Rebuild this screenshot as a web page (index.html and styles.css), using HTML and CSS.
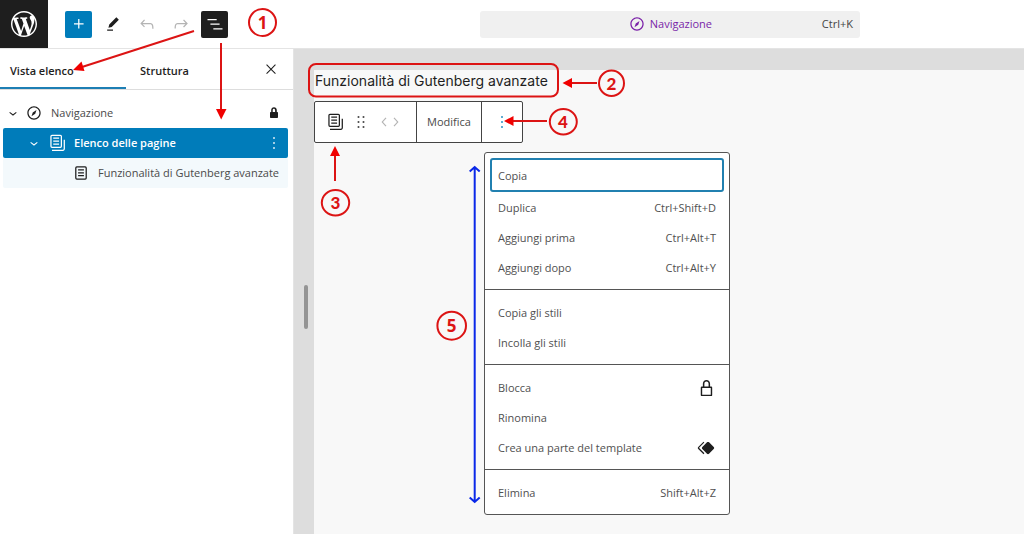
FILE: index.html
```html
<!DOCTYPE html>
<html lang="it">
<head>
<meta charset="utf-8">
<title>Navigazione</title>
<link rel="stylesheet" href="styles.css">
</head>
<body>
<svg class="sprite" aria-hidden="true">
  <symbol id="navigation" viewBox="0 0 24 24"><path d="M12 4c-4.400 0-8 3.600-8 8s3.600 8 8 8 8-3.600 8-8-3.600-8-8-8zm0 14.500c-3.600 0-6.500-2.900-6.500-6.500S8.400 5.500 12 5.500s6.500 2.900 6.500 6.500-2.900 6.500-6.500 6.500zM9 16l4.500-3L15 8.400l-4.500 3L9 16z"/></symbol>
  <symbol id="chevron" viewBox="0 0 24 24"><path d="M17.500 11.600L12 16l-5.500-4.400.9-1.200L12 14l4.500-3.600 1 1.200z"/></symbol>
  <symbol id="pages" viewBox="0 0 24 24"><path d="M14.500 5.500h-7V7h7V5.500ZM7.500 9h7v1.500h-7V9Zm7 3.500h-7V14h7v-1.500Z"/><path fill-rule="evenodd" d="M16 2H6a2 2 0 0 0-2 2v12a2 2 0 0 0 2 2h10a2 2 0 0 0 2-2V4a2 2 0 0 0-2-2ZM6 3.500h10a.5.5 0 0 1 .5.5v12a.5.5 0 0 1-.5.5H6a.5.5 0 0 1-.5-.5V4a.5.5 0 0 1 .5-.5Z"/><path d="M20 8v11c0 .69-.31 1-.999 1H6v1.500h13.001c1.520 0 2.499-.982 2.499-2.500V8H20Z"/></symbol>
  <symbol id="more" viewBox="0 0 24 24"><path d="M13 19h-2v-2h2v2zm0-6h-2v-2h2v2zm0-6h-2V5h2v2z"/></symbol>
</svg>

<div class="editor">
  <header class="header">
    <a class="logo" href="#" aria-label="WordPress">
      <svg viewBox="0 0 20 20"><path d="M20 10c0-5.510-4.490-10-10-10C4.480 0 0 4.490 0 10c0 5.520 4.480 10 10 10 5.510 0 10-4.480 10-10zM7.780 15.370L4.370 6.220c.55-.02 1.170-.08 1.170-.08.5-.06.44-1.130-.06-1.110 0 0-1.450.11-2.370.11-.18 0-.37 0-.58-.01C4.120 2.690 6.870 1.110 10 1.110c2.330 0 4.450.87 6.050 2.340-.68-.11-1.650.39-1.650 1.580 0 .74.45 1.360.9 2.100.35.61.55 1.360.55 2.460 0 1.490-1.400 5-1.400 5l-3.030-8.370c.54-.02.82-.17.82-.17.5-.05.44-1.250-.06-1.220 0 0-1.440.12-2.380.12-.87 0-2.330-.12-2.330-.12-.5-.03-.56 1.200-.06 1.220l.92.08 1.260 3.410zM17.410 10c.24-.64.74-1.870.43-4.250.7 1.290 1.050 2.710 1.050 4.250 0 3.290-1.730 6.240-4.400 7.780.97-2.590 1.940-5.200 2.920-7.780zM6.100 18.090C3.120 16.650 1.110 13.530 1.110 10c0-1.300.23-2.480.72-3.590C3.250 10.300 4.670 14.200 6.100 18.090zm4.030-6.630l2.580 6.980c-.86.29-1.760.45-2.710.45-.79 0-1.570-.11-2.290-.33.81-2.380 1.620-4.740 2.420-7.100z"/></svg>
    </a>
    <div class="tools">
      <button class="tool primary" aria-label="Aggiungi blocco"><svg class="icon" viewBox="0 0 24 24"><path d="M11 12.500V17.500H12.500V12.500H17.500V11H12.500V6H11V11H6V12.500H11Z"/></svg></button>
      <button class="tool" aria-label="Strumenti"><svg class="icon" viewBox="0 0 24 24"><path d="m19 7-3-3-8.500 8.500-1 4 4-1L19 7Zm-7 11.500H5V20h7v-1.500Z"/></svg></button>
      <button class="tool muted" aria-label="Annulla"><svg class="icon" viewBox="0 0 24 24"><path d="M18.300 11.700c-.6-.6-1.400-.9-2.300-.9H6.700l2.900-3.300-1.100-1-4.500 5L8.500 16l1-1-2.700-2.700H16c.5 0 .9.2 1.300.5 1 1 1 3.400 1 4.500v.3h1.500v-.2c0-1.500 0-4.300-1.500-5.700z"/></svg></button>
      <button class="tool muted" aria-label="Ripeti"><svg class="icon" viewBox="0 0 24 24"><path d="M15.600 6.500l-1.100 1 2.900 3.300H8c-.9 0-1.700.3-2.300.9-1.400 1.500-1.400 4.200-1.400 5.600v.2h1.500v-.3c0-1.100 0-3.500 1-4.500.3-.3.7-.5 1.300-.5h9.200L14.500 15l1.100 1.100 4.600-4.600-4.600-5z"/></svg></button>
      <button class="tool pressed" aria-label="Vista elenco" aria-pressed="true"><svg class="icon" viewBox="0 0 24 24"><path d="M3 6h11v1.500H3V6Zm3.500 5.500h11V13h-11v-1.500ZM21 17H10v1.500h11V17Z"/></svg></button>
    </div>
    <button class="command">
      <span class="command-title"><svg class="icon"><use href="#navigation"/></svg>Navigazione</span>
      <span class="command-key">Ctrl+K</span>
    </button>
  </header>

  <div class="body">
    <aside class="sidebar">
      <div class="tabs" role="tablist">
        <button class="tab active" role="tab" aria-selected="true">Vista elenco</button>
        <button class="tab" role="tab" aria-selected="false">Struttura</button>
        <button class="close" aria-label="Chiudi"><svg viewBox="4 4 16 16"><path d="M5.500 4.500 12 11l6.500-6.500 1.200 1.200L13.200 12.200l6.500 6.500-1.200 1.200-6.500-6.500-6.500 6.500-1.200-1.200 6.500-6.500-6.500-6.500z"/></svg></button>
      </div>
      <ul class="tree">
        <li class="row">
          <svg class="icon chevron"><use href="#chevron"/></svg>
          <svg class="icon"><use href="#navigation"/></svg>
          <span class="row-label">Navigazione</span>
          <svg class="icon" viewBox="2 2 20 20"><path d="M15 11h-.2V9c0-1.500-1.200-2.800-2.800-2.800S9.200 7.500 9.200 9v2H9c-.6 0-1 .4-1 1v4c0 .6.4 1 1 1h6c.6 0 1-.4 1-1v-4c0-.6-.4-1-1-1zm-1.800 0h-2.500V9c0-.7.6-1.200 1.200-1.200s1.200.6 1.200 1.200v2z"/></svg>
        </li>
        <li class="row level-2 selected">
          <svg class="icon chevron"><use href="#chevron"/></svg>
          <svg class="icon"><use href="#pages"/></svg>
          <span class="row-label">Elenco delle pagine</span>
          <button class="row-more" aria-label="Opzioni"><svg class="icon"><use href="#more"/></svg></button>
        </li>
        <li class="row level-3 branch">
          <svg class="icon" viewBox="0 0 24 24"><path d="M15.500 7.500h-7V9h7V7.500Zm-7 3.500h7v1.500h-7V11Zm7 3.500h-7V16h7v-1.500Z"/><path fill-rule="evenodd" d="M17 4H7a2 2 0 0 0-2 2v12a2 2 0 0 0 2 2h10a2 2 0 0 0 2-2V6a2 2 0 0 0-2-2ZM7 5.500h10a.5.5 0 0 1 .5.5v12a.5.5 0 0 1-.5.5H7a.5.5 0 0 1-.5-.5V6a.5.5 0 0 1 .5-.5Z"/></svg>
          <span class="row-label">Funzionalità di Gutenberg avanzate</span>
        </li>
      </ul>
    </aside>

    <main class="stage">
      <div class="gutter"><div class="handle"></div></div>
      <section class="canvas">
        <a class="page-link" href="#">Funzionalità di Gutenberg avanzate</a>
        <div class="toolbar" role="toolbar" aria-label="Strumenti del blocco">
          <div class="toolbar-group blocks">
            <button class="plain" aria-label="Elenco delle pagine"><svg class="icon"><use href="#pages"/></svg></button>
            <button class="plain" aria-label="Trascina"><svg class="icon" viewBox="0 0 24 24"><path d="M8 7h2V5H8v2zm0 6h2v-2H8v2zm0 6h2v-2H8v2zm6-14v2h2V5h-2zm0 8h2v-2h-2v2zm0 6h2v-2h-2v2z"/></svg></button>
            <span class="movers">
              <button class="plain" aria-label="Sposta a sinistra"><svg viewBox="6 4 12 16"><path d="M14.600 7l-1.200-1L8 12l5.400 6 1.200-1-4.600-5z"/></svg></button>
              <button class="plain" aria-label="Sposta a destra"><svg viewBox="6 4 12 16"><path d="M10.600 6L9.400 7l4.600 5-4.600 5 1.200 1 5.400-6z"/></svg></button>
            </span>
          </div>
          <div class="toolbar-group"><button class="plain">Modifica</button></div>
          <div class="toolbar-group options">
            <button class="plain" aria-label="Opzioni" aria-expanded="true"><svg class="icon"><use href="#more"/></svg></button>
          </div>
        </div>

        <div class="menu" role="menu">
          <div class="menu-group first">
            <button class="item focused" role="menuitem">Copia</button>
            <button class="item" role="menuitem">Duplica<span>Ctrl+Shift+D</span></button>
            <button class="item" role="menuitem">Aggiungi prima<span>Ctrl+Alt+T</span></button>
            <button class="item" role="menuitem">Aggiungi dopo<span>Ctrl+Alt+Y</span></button>
          </div>
          <div class="menu-group">
            <button class="item" role="menuitem">Copia gli stili</button>
            <button class="item" role="menuitem">Incolla gli stili</button>
          </div>
          <div class="menu-group">
            <button class="item" role="menuitem">Blocca<svg class="icon" viewBox="1 1 21 21"><path fill-rule="evenodd" d="M17 10h-1.200V7c0-2.100-1.700-3.800-3.800-3.800S8.200 4.900 8.200 7v3H7c-.6 0-1 .4-1 1v8c0 .6.4 1 1 1h10c.6 0 1-.4 1-1v-8c0-.6-.4-1-1-1zM9.800 7c0-1.200 1-2.200 2.200-2.200s2.200 1 2.200 2.200v3H9.800V7zm6.700 11.500h-9v-7h9v7z"/></svg></button>
            <button class="item" role="menuitem">Rinomina</button>
            <button class="item" role="menuitem">Crea una parte del template<svg class="icon" viewBox="0 0 24 24"><path d="M21.300 10.800l-5.600-5.600c-.7-.7-1.800-.7-2.500 0l-5.600 5.600c-.7.7-.7 1.800 0 2.500l5.600 5.600c.3.3.8.5 1.200.5s.9-.2 1.200-.5l5.600-5.600c.8-.7.8-1.900.1-2.500zm-17.600 1L10 5.500l-1-1-6.300 6.300c-.7.7-.7 1.800 0 2.500L9 19.500l1.100-1.100-6.300-6.300c-.2 0-.2-.2-.1-.3z"/></svg></button>
          </div>
          <div class="menu-group">
            <button class="item" role="menuitem">Elimina<span>Shift+Alt+Z</span></button>
          </div>
        </div>
      </section>
    </main>
  </div>

  <svg class="notes" width="740" height="520" viewBox="0 0 740 520">
    <g class="ring">
      <ellipse cx="262.500" cy="22.500" rx="13.500" ry="13.500"/>
      <ellipse cx="611.500" cy="83.300" rx="12.500" ry="12.700"/>
      <ellipse cx="335.500" cy="202.700" rx="13.700" ry="12.700"/>
      <ellipse cx="563.300" cy="121.700" rx="13.500" ry="12.700"/>
      <ellipse cx="451.700" cy="325.700" rx="14.300" ry="14"/>
      <rect x="309" y="64" width="249" height="32.500" rx="7"/>
      <path d="M194 31 L82 67M221 43V110M597 83H571M335 181V155M547 121H512"/>
    </g>
    <g class="head">
      <path d="M73 70 81.500 61.500 84.500 71zM216 109h10.500L221.200 119.500zM562.500 83 572 78v10zM335 146 330 156h10zM504 121 513.500 116v10z"/>
    </g>
    <path class="span" d="M474.700 168V501M469.700 171.500l5-4.500 5 4.500M469.700 497.500l5 4.500 5-4.500"/>
    <g class="digit">
      <text x="262.500" y="29">1</text>
      <text class="alt" x="611.500" y="90">2</text>
      <text class="alt" x="335.500" y="209">3</text>
      <text class="alt" x="563" y="128">4</text>
      <text x="451.500" y="332">5</text>
    </g>
  </svg>
</div>
</body>
</html>
```
FILE: styles.css
```css
* { box-sizing: border-box; }

body {
  margin: 0;
  background: #fff;
  color: #1e1e1e;
  font: 11px/16px "Open Sans", "Noto Sans", sans-serif;
}

button {
  margin: 0;
  padding: 0;
  border: 0;
  background: none;
  color: inherit;
  font: inherit;
}

svg { display: block; fill: currentColor; }
.sprite { position: absolute; width: 0; height: 0; }
.icon { width: 20px; height: 20px; flex: none; }

.editor {
  position: relative;
  display: flex;
  flex-direction: column;
  min-height: 100vh;
}

.header {
  display: flex;
  align-items: center;
  height: 49px;
  border-bottom: 1px solid #e4e4e4;
}

.logo {
  display: grid;
  place-items: center;
  width: 48px;
  height: 48px;
  background: #1e1e1e;
  color: #fff;
}
.logo svg { width: 26px; height: 26px; }

.tools { display: flex; gap: 7px; margin-left: 17px; }
.tool {
  display: grid;
  place-items: center;
  width: 27px;
  height: 27px;
  border-radius: 2px;
}
.primary { background: #007cba; color: #fff; }
.pressed { background: #1e1e1e; color: #fff; }
.muted { color: #b4b4b4; }

.command {
  display: flex;
  align-items: center;
  width: 380px;
  height: 27px;
  margin: 0 164px 0 auto;
  padding: 0 7px;
  border-radius: 3px;
  background: #f0f0f0;
}
.command-title {
  display: flex;
  flex: 1;
  align-items: center;
  justify-content: center;
  gap: 3px;
  padding-left: 30px;
  color: #7a1fa8;
}
.command-key { color: #444; }

.body { display: flex; flex: 1; }

.sidebar { flex: none; width: 294px; border-right: 1px solid #e4e4e4; }
.tabs {
  display: flex;
  height: 41px;
  border-bottom: 1px solid #ddd;
}
.tab {
  width: 130px;
  padding: 3px 10px 0;
  text-align: left;
  font-weight: 600;
}
.tab.active {
  background: linear-gradient(#1d7fb4, #1d7fb4) left bottom / 126px 2px no-repeat;
}
.close { margin: 0 17px 0 auto; }
.close svg { width: 10px; height: 10px; }

.tree { margin: 0; padding: 8px 5px 0 3px; list-style: none; }
.row {
  display: flex;
  align-items: center;
  height: 30px;
  padding-right: 4px;
  border-radius: 2px;
}
.row-label { flex: 1; margin-left: 7px; color: #4a4a4a; }
.chevron { width: 16px; height: 16px; margin: 0 3px 0 2px; }
.level-2 { padding-left: 21px; }
.level-2 .chevron { margin-right: 5px; }
.level-2 .row-label { color: #fff; font-weight: 600; }
.level-3 { padding-left: 68px; }
.selected { background: #007cba; color: #fff; }
.branch { background: #f3f9fc; }

.stage {
  display: flex;
  flex: 1;
  padding-top: 21px;
  background: #ddd;
}
.gutter { display: grid; place-items: center; width: 20px; }
.handle {
  width: 4px;
  height: 44px;
  margin: 10px 0 0 4px;
  border-radius: 2px;
  background: #949494;
}
.canvas { position: relative; flex: 1; background: #f8f8f8; }

.page-link {
  display: block;
  width: max-content;
  margin-bottom: 10px;
  padding-left: 1px;
  color: #1e1e1e;
  font: 14px/21px Inter, sans-serif;
  text-decoration: none;
}

.toolbar {
  display: inline-flex;
  height: 42px;
  border: 1px solid #444;
  border-radius: 2px;
  background: #fff;
}
.toolbar-group { display: flex; align-items: center; padding: 0 10px; color: #4a4a4a; }
.toolbar-group + .toolbar-group { border-left: 1px solid #444; }
.blocks { gap: 6px; padding: 0 16px 0 10px; color: #1e1e1e; }
.movers { display: flex; gap: 2px; margin-left: 3px; color: #b4b4b4; }
.movers svg { width: 9px; height: 12px; }
.toolbar .options { color: #007cba; }

.menu {
  position: absolute;
  top: 82px;
  left: 170px;
  width: 246px;
  border: 1px solid #555;
  border-radius: 3px;
  background: #fff;
}
.menu-group { padding: 7px 5px; }
.menu-group.first { padding-top: 5px; }
.menu-group + .menu-group { border-top: 1px solid #555; }
.item {
  display: flex;
  align-items: center;
  justify-content: space-between;
  width: 100%;
  height: 30px;
  padding: 1px 8px 0;
  color: #505050;
}
.item .icon { color: #1e1e1e; }
.item.focused {
  height: 34px;
  padding: 2px 6px 0;
  border: 2px solid #2180b0;
  border-radius: 3px;
}

.notes {
  position: absolute;
  top: 0;
  left: 0;
  pointer-events: none;
}
.ring { fill: none; stroke: #dc1414; stroke-width: 2; }
.head { fill: #f00000; }
.span { fill: none; stroke: #0a28e8; stroke-width: 2; }
.digit {
  fill: #dc1414;
  font: 700 17px "Open Sans", sans-serif;
  text-anchor: middle;
}
.alt { font-family: Lato, sans-serif; font-weight: 900; }
```
